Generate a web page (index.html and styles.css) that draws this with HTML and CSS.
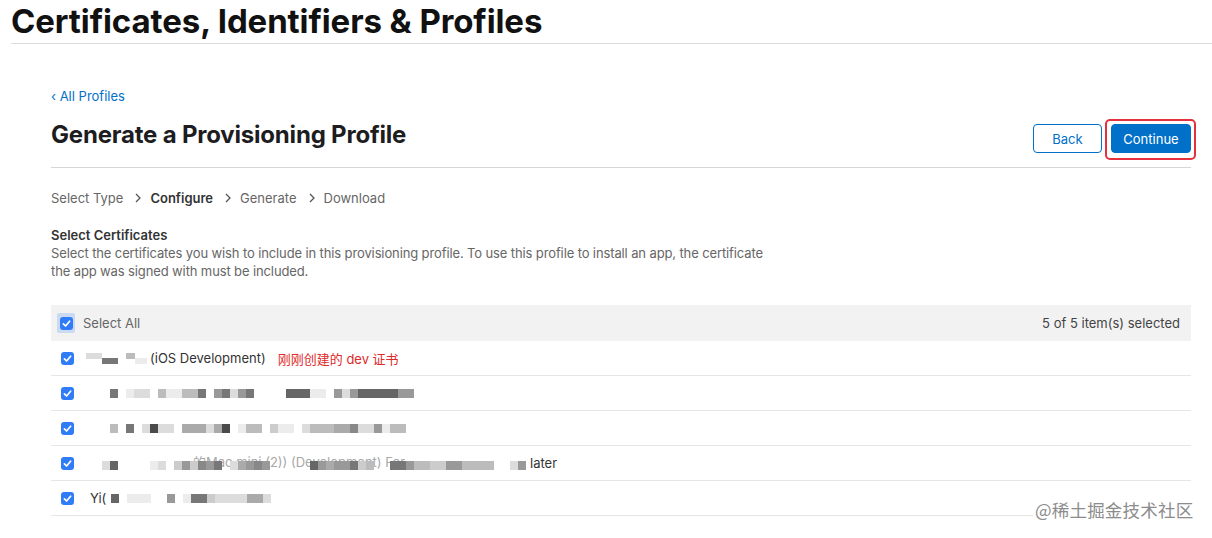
FILE: index.html
```html
<!DOCTYPE html>
<html lang="en">
<head>
<meta charset="utf-8">
<title>Generate a Provisioning Profile</title>
<link rel="stylesheet" href="styles.css">
</head>
<body>
<header class="site-header">
  <h1 class="site-title">Certificates, Identifiers &amp; Profiles</h1>
</header>
<main class="page">
  <a class="back-link" href="#">‹ All Profiles</a>
  <div class="title-row">
    <h2 class="page-title">Generate a Provisioning Profile</h2>
    <div class="actions">
      <button class="btn btn-secondary">Back</button>
      <span class="highlight"><button class="btn btn-primary">Continue</button></span>
    </div>
  </div>
  <nav class="steps">
    <span class="step">Select Type</span>
    <svg class="chev" viewBox="0 0 6 10" width="6" height="10"><polyline points="1,1 5,5 1,9" fill="none" stroke="#555" stroke-width="1.3"/></svg>
    <span class="step current">Configure</span>
    <svg class="chev" viewBox="0 0 6 10" width="6" height="10"><polyline points="1,1 5,5 1,9" fill="none" stroke="#555" stroke-width="1.3"/></svg>
    <span class="step">Generate</span>
    <svg class="chev" viewBox="0 0 6 10" width="6" height="10"><polyline points="1,1 5,5 1,9" fill="none" stroke="#555" stroke-width="1.3"/></svg>
    <span class="step">Download</span>
  </nav>
  <section class="intro">
    <h3 class="intro-title">Select Certificates</h3>
    <p class="intro-text">Select the certificates you wish to include in this provisioning profile. To use this profile to install an app, the certificate the app was signed with must be included.</p>
  </section>
  <div class="table">
    <div class="table-head">
      <span class="focus"><span class="cb"><svg viewBox="0 0 13 13" width="13" height="13"><polyline points="3.4,6.8 5.6,9 9.6,4.2" fill="none" stroke="#fff" stroke-width="1.7" stroke-linecap="round" stroke-linejoin="round"/></svg></span></span>
      <span class="head-label">Select All</span>
      <span class="head-count">5 of 5 item(s) selected</span>
    </div>
    <div class="row">
      <span class="cb"><svg viewBox="0 0 13 13" width="13" height="13"><polyline points="3.4,6.8 5.6,9 9.6,4.2" fill="none" stroke="#fff" stroke-width="1.7" stroke-linecap="round" stroke-linejoin="round"/></svg></span>
      <span class="cell-text">
        <span class="mosaic m-small"><i class="px w16 s-b"></i><i class="px w16 s-e dn"></i><i class="px w8 s-o"></i><i class="px w9 s-c"></i><i class="px w12 s-a dn"></i></span>
        <span class="name">(iOS Development)</span>
        <span class="note">刚刚创建的 dev 证书</span>
      </span>
    </div>
    <div class="row">
      <span class="cb"><svg viewBox="0 0 13 13" width="13" height="13"><polyline points="3.4,6.8 5.6,9 9.6,4.2" fill="none" stroke="#fff" stroke-width="1.7" stroke-linecap="round" stroke-linejoin="round"/></svg></span>
      <span class="cell-text indent">
        <span class="mosaic"><i class="px s-e"></i><i class="px s-o"></i><i class="px s-a"></i><i class="px s-b"></i><i class="px s-b"></i><i class="px s-o"></i><i class="px s-c"></i><i class="px s-a"></i><i class="px s-a"></i><i class="px s-c"></i><i class="px s-c"></i><i class="px s-e"></i><i class="px s-o"></i><i class="px s-d"></i><i class="px s-e"></i><i class="px s-b"></i><i class="px s-d"></i><i class="px s-e"></i><i class="px s-o"></i><i class="px s-o"></i><i class="px s-o"></i><i class="px s-o"></i><i class="px s-f"></i><i class="px s-f"></i><i class="px s-f"></i><i class="px s-a"></i><i class="px s-a"></i><i class="px s-o"></i><i class="px s-d"></i><i class="px s-b"></i><i class="px s-d"></i><i class="px s-f"></i><i class="px s-f"></i><i class="px s-f"></i><i class="px s-f"></i><i class="px s-f"></i><i class="px s-d"></i><i class="px s-d"></i></span>
      </span>
    </div>
    <div class="row">
      <span class="cb"><svg viewBox="0 0 13 13" width="13" height="13"><polyline points="3.4,6.8 5.6,9 9.6,4.2" fill="none" stroke="#fff" stroke-width="1.7" stroke-linecap="round" stroke-linejoin="round"/></svg></span>
      <span class="cell-text indent">
        <span class="mosaic"><i class="px s-c"></i><i class="px s-o"></i><i class="px s-e"></i><i class="px s-o"></i><i class="px s-b dn"></i><i class="px s-g"></i><i class="px s-b"></i><i class="px s-b"></i><i class="px s-o"></i><i class="px s-cd"></i><i class="px s-cd"></i><i class="px s-cd"></i><i class="px s-b"></i><i class="px s-cd"></i><i class="px s-g"></i><i class="px s-o"></i><i class="px s-a"></i><i class="px s-c"></i><i class="px s-c"></i><i class="px s-o"></i><i class="px s-bc"></i><i class="px s-a"></i><i class="px s-a"></i><i class="px s-o"></i><i class="px s-b"></i><i class="px s-c"></i><i class="px s-c"></i><i class="px s-c"></i><i class="px s-cd"></i><i class="px s-cd"></i><i class="px s-de"></i><i class="px s-b"></i><i class="px s-b"></i><i class="px s-d"></i><i class="px s-a"></i><i class="px s-c"></i><i class="px s-c"></i></span>
      </span>
    </div>
    <div class="row">
      <span class="cb"><svg viewBox="0 0 13 13" width="13" height="13"><polyline points="3.4,6.8 5.6,9 9.6,4.2" fill="none" stroke="#fff" stroke-width="1.7" stroke-linecap="round" stroke-linejoin="round"/></svg></span>
      <span class="cell-text">
        <span class="stack">
          <span class="ghost">的Mac mini (2)) (Development) For</span>
          <span class="mosaic m-row4"><i class="px s-b"></i><i class="px s-f"></i><i class="px s-o"></i><i class="px s-o"></i><i class="px s-o"></i><i class="px s-o"></i><i class="px s-a"></i><i class="px s-b"></i><i class="px s-o"></i><i class="px s-bc"></i><i class="px s-d"></i><i class="px s-bc"></i><i class="px s-de"></i><i class="px s-d"></i><i class="px s-e"></i><i class="px s-o"></i><i class="px s-b"></i><i class="px s-cd"></i><i class="px s-d"></i><i class="px s-de"></i><i class="px s-d"></i><i class="px s-o"></i><i class="px s-o"></i><i class="px s-o"></i><i class="px s-o"></i><i class="px s-o"></i><i class="px s-f"></i><i class="px s-d"></i><i class="px s-cd"></i><i class="px s-d"></i><i class="px s-d"></i><i class="px s-e"></i><i class="px s-bc"></i><i class="px s-c"></i><i class="px s-o"></i><i class="px s-o"></i><i class="px s-e"></i><i class="px s-e"></i><i class="px s-d"></i><i class="px s-c"></i><i class="px s-c"></i><i class="px s-bc"></i><i class="px s-bc"></i><i class="px s-d"></i><i class="px s-d"></i><i class="px s-c"></i><i class="px s-c"></i><i class="px s-c"></i><i class="px s-c"></i><i class="px s-o"></i><i class="px s-o"></i><i class="px s-b"></i><i class="px s-d"></i></span>
        </span>
        <span class="name">later</span>
      </span>
    </div>
    <div class="row">
      <span class="cb"><svg viewBox="0 0 13 13" width="13" height="13"><polyline points="3.4,6.8 5.6,9 9.6,4.2" fill="none" stroke="#fff" stroke-width="1.7" stroke-linecap="round" stroke-linejoin="round"/></svg></span>
      <span class="cell-text tight">
        <span class="name">Yi(</span>
        <span class="mosaic m-row5"><i class="px s-f"></i><i class="px s-o"></i><i class="px s-a"></i><i class="px s-a"></i><i class="px s-a"></i><i class="px s-o"></i><i class="px s-o"></i><i class="px s-d"></i><i class="px s-o"></i><i class="px s-a"></i><i class="px s-e"></i><i class="px s-e"></i><i class="px s-bc"></i><i class="px s-b"></i><i class="px s-b"></i><i class="px s-b"></i><i class="px s-b"></i><i class="px s-cd"></i><i class="px s-cd"></i><i class="px s-b"></i></span>
      </span>
    </div>
  </div>
</main>
<div class="watermark">@稀土掘金技术社区</div>
</body>
</html>
```
FILE: styles.css
```css
* { box-sizing: border-box; }
html, body { margin: 0; padding: 0; background: #fff; }
body {
  font-family: Inter, "Noto Sans", "Noto Sans CJK SC", sans-serif;
  color: #333;
  font-size: 13px;
  position: relative;
  min-height: 538px;
}
.site-header {
  margin-left: 11px;
  border-bottom: 1px solid #dcdcdc;
  padding: 2px 0 3px;
}
.site-title {
  margin: 0;
  font-size: 33px;
  line-height: 38px;
  font-weight: 700;
  color: #111;
  letter-spacing: -0.1px;
}
.page {
  margin: 43px 21px 0 51px;
}
.back-link {
  display: block;
  color: #0070c9;
  text-decoration: none;
  font-size: 13px;
  line-height: 18px;
}
.title-row {
  display: flex;
  align-items: center;
  justify-content: space-between;
  border-bottom: 1px solid #d6d6d6;
  padding: 14px 0 7px;
}
.page-title {
  margin: 0 0 10px;
  font-size: 24px;
  line-height: 30px;
  font-weight: 700;
  color: #1d1d1f;
  letter-spacing: -0.2px;
}
.actions {
  display: flex;
  align-items: flex-start;
}
.btn {
  font-family: Inter, "Noto Sans", sans-serif;
  font-size: 13px;
  height: 29px;
  border-radius: 4px;
  padding: 0;
  cursor: pointer;
}
.btn-secondary {
  width: 69px;
  background: #fff;
  color: #0070c9;
  border: 1px solid #0070c9;
  margin: 5px 3px 0 0;
}
.btn-primary {
  width: 80px;
  background: #0070c9;
  color: #fff;
  border: 1px solid #0070c9;
  display: block;
}
.highlight {
  display: block;
  border: 2px solid #e4313f;
  border-radius: 5px;
  padding: 3px 3px 5px 4px;
  margin-right: -5px;
}
.steps {
  display: flex;
  align-items: center;
  margin-top: 21px;
  line-height: 18px;
  color: #666;
}
.chev { margin: 0 9px 0 12px; display: block; }
.step { color: #666; }
.step.current { color: #333; font-weight: 600; }
.intro { margin-top: 19px; }
.intro-title {
  margin: 0;
  font-size: 13px;
  line-height: 18px;
  font-weight: 600;
  color: #333;
}
.intro-text {
  margin: 0;
  max-width: 725px;
  line-height: 18px;
  color: #666;
  letter-spacing: -0.12px;
}
.table { margin-top: 25px; }
.table-head {
  display: flex;
  align-items: center;
  height: 36px;
  background: #f2f2f2;
  padding: 0 11px 0 6px;
}
.focus {
  display: flex;
  align-items: center;
  justify-content: center;
  width: 18px;
  height: 20px;
  background: #c9daf2;
  border-radius: 2px;
  margin-right: 8px;
}
.head-label { color: #666; }
.head-count { margin-left: auto; color: #444; }
.row {
  display: flex;
  align-items: center;
  height: 35px;
  border-bottom: 1px solid #e6e6e6;
  padding-left: 10px;
}
.cb {
  width: 13px;
  height: 13px;
  border-radius: 3px;
  background: #2f7cf6;
  display: flex;
  flex: none;
}
.cb svg { display: block; }
.cell-text {
  display: flex;
  align-items: center;
  margin-left: 12px;
  color: #333;
}
.cell-text.indent { margin-left: 36px; }
.cell-text.tight { margin-left: 16px; }
.name { color: #333; }
.note { color: #e02a2a; margin-left: 12px; }
.mosaic {
  display: flex;
  height: 9px;
  align-items: flex-start;
}
.m-small { height: 11px; margin-right: 3px; }
.m-row4 { margin-left: 16px; }
.m-row5 { margin-left: 5px; }
.px { display: block; width: 8px; height: 9px; flex: none; }
.w8 { width: 8px; }
.w9 { width: 9px; }
.w12 { width: 12px; }
.w16 { width: 16px; }
.m-small .px { height: 6px; }
.dn { align-self: flex-end; }
.s-o { background: transparent; }
.s-a { background: #ececec; }
.s-b { background: #dcdcdc; }
.s-bc { background: #cccccc; }
.s-c { background: #bcbcbc; }
.s-cd { background: #aaaaaa; }
.s-d { background: #999; }
.s-de { background: #888; }
.s-e { background: #777; }
.s-f { background: #666; }
.s-g { background: #4a4a4a; }
.stack {
  display: grid;
  align-items: center;
}
.stack > * { grid-area: 1 / 1; }
.ghost {
  color: #a8a8a8;
  margin-left: 107px;
  white-space: nowrap;
  margin-top: -4px;
}
.stack .mosaic { margin-top: 4px; }
.row .stack + .name { margin-left: 4px; }
.watermark {
  position: absolute;
  left: 1033px;
  top: 497px;
  font-family: "Noto Sans CJK SC", sans-serif;
  font-size: 17.5px;
  line-height: 26px;
  color: #8c8c8c;
  background: #fff;
  padding: 0 2px;
  letter-spacing: 0.2px;
}
```
